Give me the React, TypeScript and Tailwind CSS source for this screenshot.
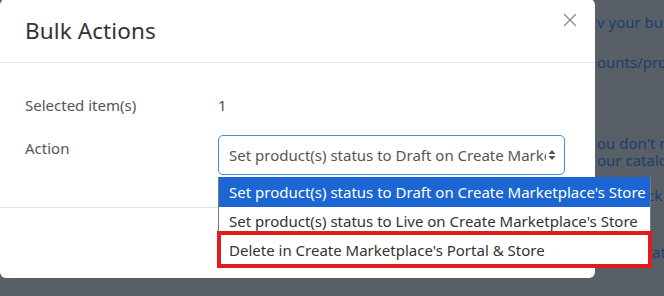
import { X } from "lucide-react";

const font = { fontFamily: '"Noto Sans", "Open Sans", sans-serif' };

export default function App() {
  return (
    <div className="relative w-[664px] h-[296px] overflow-hidden bg-[#585f67]" style={font}>
      {/* page behind the backdrop */}
      <div className="pl-[597px] text-[15px] text-[#1e3d6e] whitespace-nowrap leading-[17px]">
        <div className="pt-[14px]">v your business</div>
        <div className="pt-[23px]">ounts/promotions</div>
        <div className="pt-[64px]">ou don't manage</div>
        <div>our catalog</div>
        <div className="pt-[18px] pl-[50px]">ck</div>
        <div className="pt-[40px] pl-[55px]">at</div>
      </div>
      <div className="absolute left-[10px] top-[290px] text-[15px] text-[#1e3d6e] whitespace-nowrap">
        existing and drive continuing customer traffic and sales, then reach new buyers with each acquisition and keep
      </div>

      {/* modal */}
      <div className="absolute left-0 top-[-1px] w-[595px] h-[279px] bg-white rounded-[6px] flex flex-col">
        <div className="h-[64px] border-b border-[#e5e5e5] flex items-center justify-between pl-[25px] pr-[14px]">
          <h4 className="text-[22.5px] text-[#333] tracking-[0.1px]">Bulk Actions</h4>
          <X className="self-start mt-[10px] w-[22px] h-[22px] text-[#8a8a8a]" strokeWidth={1.3} />
        </div>
        <div className="h-[144px] pl-[25px] pr-[30px] pt-[30px] text-[15px] text-[#555]">
          <div className="flex h-[24px] items-center">
            <div className="w-[193px]">Selected item(s)</div>
            <div>1</div>
          </div>
          <div className="flex mt-[18px]">
            <div className="w-[193px] pt-[2px]">Action</div>
            <div className="w-[347px] h-[40px] border border-[#3d8ee0] rounded-[5px] flex items-center pl-[10px] pr-[8px]">
              <span className="flex-1 overflow-hidden whitespace-nowrap">Set product(s) status to Draft on Create Marketplace's Store</span>
              <svg width="8" height="12" viewBox="0 0 8 12" className="ml-[2px]">
                <path d="M4 1 L7.5 5 H0.5 Z" fill="#555" />
                <path d="M4 11 L7.5 7 H0.5 Z" fill="#555" />
              </svg>
            </div>
          </div>
        </div>
        <div className="flex-1 border-t border-[#e5e5e5]" />
      </div>

      {/* open select list */}
      <div className="absolute left-[218px] top-[177px] w-[433px] bg-white border border-t-0 border-[#7a7a7a] text-[15px] text-[#333] whitespace-nowrap">
        <div className="h-[30px] flex items-center pl-[10px] bg-[#1b66d2] text-white">Set product(s) status to Draft on Create Marketplace's Store</div>
        <div className="h-[29px] flex items-center pl-[10px]">Set product(s) status to Live on Create Marketplace's Store</div>
        <div className="h-[29px] flex items-center pl-[10px]">Delete in Create Marketplace's Portal &amp; Store</div>
      </div>
      <div className="absolute left-[217px] top-[231px] w-[435px] h-[37px] border-[4px] border-[#e21c1c]" />
    </div>
  );
}
